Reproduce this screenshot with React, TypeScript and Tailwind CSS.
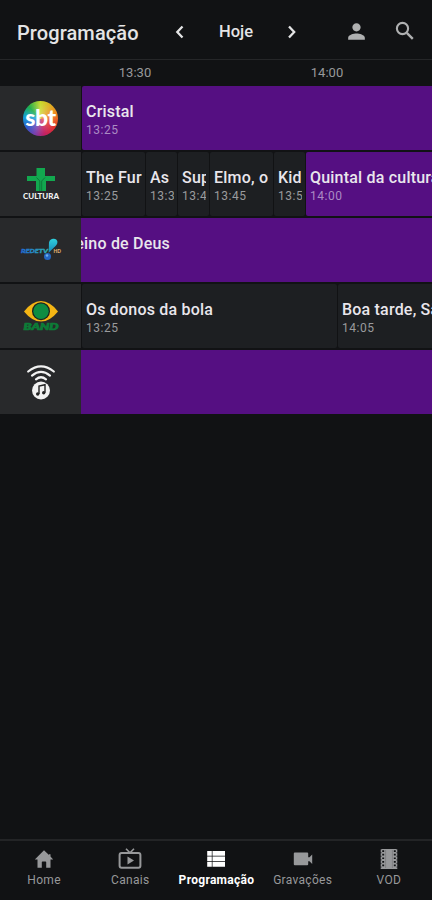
import React, { useState } from 'react';
import { MdPerson } from 'react-icons/md';

interface Program {
  title: string;
  time?: string;
  width: string;
  live?: boolean;
}

interface Channel {
  id: string;
  logo: React.ReactNode;
  programs: Program[];
}

const SbtLogo = () => (
  <div className="relative w-[35px] h-[35px] rounded-full flex items-center justify-center bg-[radial-gradient(circle,rgba(255,255,255,0.3),transparent_65%),conic-gradient(#c9d92c,#f08a1d_70deg,#e2342b_120deg,#c41f62_165deg,#7a3fae_200deg,#2f56c9_235deg,#12a0d8_275deg,#1fae4b_315deg,#c9d92c)]">
    <span className="font-['Lato'] font-black text-[23px] leading-none tracking-[-0.5px] text-white -mt-px">sbt</span>
  </div>
);

const CulturaLogo = () => (
  <svg width="38" height="34" viewBox="0 0 38 34">
    <path d="M14.500 1h8.500v8h10v5h-9v10h-10v-10h-9V9h9.500z" fill="#12a84f" />
    <path d="M14.500 10.500l3.300 3.500v10M23 10.500l-3.300 3.500v10" fill="none" stroke="#0b6e35" strokeWidth="0.8" />
    <text x="19" y="32.300" textAnchor="middle" textLength="36" lengthAdjust="spacingAndGlyphs" fontFamily="Lato" fontWeight="900" fontSize="7.800" fill="#f0f0f0">CULTURA</text>
  </svg>
);

const RedeTvLogo = () => (
  <svg width="42" height="24" viewBox="0 0 42 24">
    <defs>
      <linearGradient id="rtv" x1="0" x2="1">
        <stop offset="0" stopColor="#1f6bd6" />
        <stop offset="1" stopColor="#2fb8b4" />
      </linearGradient>
      <linearGradient id="drop" x1="0" x2="0" y1="0" y2="1">
        <stop offset="0" stopColor="#2fd0dd" />
        <stop offset="1" stopColor="#1786b8" />
      </linearGradient>
    </defs>
    <text x="1" y="14.500" textLength="27" lengthAdjust="spacingAndGlyphs" fontFamily="Lato" fontStyle="italic" fontWeight="900" fontSize="6.200" fill="url(#rtv)" stroke="url(#rtv)" strokeWidth="0.3">REDETV</text>
    <path d="M29 4.500C29.500 1.500 32 .5 34 .8c2.800.3 4 2.500 3.200 4.700-.9 2.700-4.700 5-8.700 9.500.6-4 .2-7 .5-10.500z" fill="url(#drop)" />
    <circle cx="27.500" cy="18.500" r="3.500" fill="#2467c4" />
    <circle cx="27" cy="17.500" r="1.300" fill="#6fb0ea" />
    <text x="33.500" y="14.500" textLength="7.500" lengthAdjust="spacingAndGlyphs" fontFamily="Lato" fontWeight="900" fontSize="4.800" fill="#e0b070">HD</text>
  </svg>
);

const BandLogo = () => (
  <svg width="38" height="32" viewBox="0 0 38 32">
    <path d="M2 11.500Q10 1 19 1t17 10.500Q28 21.500 19 21.500T2 11.500z" fill="#f4b514" />
    <circle cx="19" cy="11.200" r="9" fill="#1d2420" />
    <circle cx="19" cy="11.200" r="7.700" fill="#0e8c42" />
    <text x="1.500" y="30" textLength="35" lengthAdjust="spacingAndGlyphs" fontFamily="Lato" fontStyle="italic" fontWeight="900" fontSize="8.800" fill="#0c7c37" stroke="#0c7c37" strokeWidth="0.7">BAND</text>
  </svg>
);

const RadioLogo = () => (
  <svg width="30" height="36" viewBox="0 0 30 36">
    <g fill="none" stroke="#f2f2f2" strokeWidth="2.200" strokeLinecap="round">
      <path d="M2.200 7.500Q15-2.600 27.800 7.500" />
      <path d="M6 11.600Q15 4.200 24 11.600" />
      <path d="M10 15.300Q15 11.200 20 15.300" />
    </g>
    <circle cx="15" cy="26.500" r="9" fill="#f2f2f2" />
    <path d="M13 30v-8l6-1.300v8" fill="none" stroke="#222" strokeWidth="1.400" />
    <circle cx="11.700" cy="30" r="1.700" fill="#222" />
    <circle cx="17.700" cy="28.800" r="1.700" fill="#222" />
  </svg>
);

const Chevron: React.FC<{ d: string }> = ({ d }) => (
  <svg width="24" height="24" viewBox="0 0 24 24">
    <path d={d} fill="none" stroke="currentColor" strokeWidth="2.300" />
  </svg>
);

const SearchIcon = () => (
  <svg width="24" height="24" viewBox="0 0 24 24" fill="none" stroke="currentColor">
    <circle cx="9.500" cy="9.500" r="5.600" strokeWidth="2.100" />
    <path d="M13.800 13.800l6 6" strokeWidth="2.400" />
  </svg>
);

const HomeIcon = () => (
  <svg width="24" height="24" viewBox="0 0 24 24" fill="currentColor">
    <path d="M12 3.200L2.800 12.500h2.700v8.200h4.300v-5.500q0-.7.700-.7h3q.7 0 .7.700v5.500h4.300v-8.200h2.700L18.500 9.500V7.200h-1.500v.900z" />
  </svg>
);

const TvIcon = () => (
  <svg width="24" height="24" viewBox="0 0 24 24">
    <rect x="1.600" y="6" width="20.800" height="14.800" rx="2" fill="none" stroke="currentColor" strokeWidth="2" />
    <path d="M8 1.800l4 4 4-4" fill="none" stroke="currentColor" strokeWidth="1.600" />
    <path d="M9.500 9.500v8l6.500-4z" fill="currentColor" />
  </svg>
);

const GuideIcon = () => (
  <svg width="24" height="24" viewBox="0 0 24 24" fill="currentColor">
    <path d="M3.200 4h4.600v4.800H3.200zM8.500 4H21v4.800H8.500zM3.200 9.500h4.600v4.800H3.200zM8.500 9.500H21v4.800H8.500zM3.200 15h4.600v4.800H3.200zM8.500 15H21v4.800H8.500z" />
  </svg>
);

const CameraIcon = () => (
  <svg width="24" height="24" viewBox="0 0 24 24" fill="currentColor">
    <path d="M3.800 5.500h12.400q1 0 1 1v3.700h1.300l2.700-2.700v9.500l-2.700-2.700h-1.300v3q0 1-1 1H3.800q-1 0-1-1V6.500q0-1 1-1z" />
  </svg>
);

const FilmIcon = () => (
  <svg width="24" height="24" viewBox="0 0 24 24">
    <path d="M3.700 2h16.600v20H3.700z" fill="currentColor" />
    <path d="M6.200 3.200v18M17.800 3.200v18" stroke="#111214" strokeWidth="1.900" strokeDasharray="1.700 1.900" />
    <path d="M3.900 1.500v21M20.100 1.500v21" stroke="#111214" strokeWidth="0.900" strokeDasharray="1.200 2.400" />
    <path d="M8.600 3v18M15.400 3v18" stroke="#6c6d6f" strokeWidth="0.500" />
  </svg>
);

const CHANNELS: Channel[] = [
  {
    id: 'sbt',
    logo: <SbtLogo />,
    programs: [{ title: 'Cristal', time: '13:25', width: 'w-[400px]', live: true }],
  },
  {
    id: 'cultura',
    logo: <CulturaLogo />,
    programs: [
      { title: 'The Fur', time: '13:25', width: 'w-[64px]' },
      { title: 'As', time: '13:35', width: 'w-[32px]' },
      { title: 'Super', time: '13:40', width: 'w-[32px]' },
      { title: 'Elmo, o', time: '13:45', width: 'w-[64px]' },
      { title: 'Kid', time: '13:55', width: 'w-[32px]' },
      { title: 'Quintal da cultura', time: '14:00', width: 'w-[192px]', live: true },
    ],
  },
  {
    id: 'redetv',
    logo: <RedeTvLogo />,
    programs: [{ title: 'Reino de Deus', width: 'w-[421px] -ml-[21px]', live: true }],
  },
  {
    id: 'band',
    logo: <BandLogo />,
    programs: [
      { title: 'Os donos da bola', time: '13:25', width: 'w-[256px]' },
      { title: 'Boa tarde, São Paulo', time: '14:05', width: 'w-[256px]' },
    ],
  },
  {
    id: 'radio',
    logo: <RadioLogo />,
    programs: [{ title: '', width: 'w-[421px] -ml-[21px]', live: true }],
  },
];

const TABS = [
  { label: 'Home', Icon: HomeIcon },
  { label: 'Canais', Icon: TvIcon },
  { label: 'Programação', Icon: GuideIcon },
  { label: 'Gravações', Icon: CameraIcon },
  { label: 'VOD', Icon: FilmIcon },
];

const ProgramCell: React.FC<{ program: Program }> = ({ program }) => (
  <div className={`${program.width} shrink-0 h-full pr-px`}>
    <div className={`h-full pl-1 pr-[3px] pt-4 overflow-hidden rounded-[2px] ${program.live ? 'bg-[#550f82]' : 'bg-[#1d1f22]'}`}>
      <div className="overflow-hidden">
        <div className="text-[16px] leading-5 font-medium tracking-[0.2px] whitespace-nowrap text-[#e9e6ec]">{program.title}</div>
        <div className={`text-[12px] leading-[17px] tracking-[0.5px] whitespace-nowrap ${program.live ? 'text-[#ab8bc4]' : 'text-[#9a9b9d]'}`}>{program.time}</div>
      </div>
    </div>
  </div>
);

const App: React.FC = () => {
  const [activeTab, setActiveTab] = useState('Programação');

  return (
    <div className="w-full h-[900px] flex flex-col overflow-hidden bg-[#111214] font-['Roboto',sans-serif]">
      <header className="h-[60px] shrink-0 flex items-center pt-[6px] pl-[17px] pr-[15px] border-b border-[#252628] text-[#e4e4e5]">
        <h1 className="w-[151px] text-[20px] font-medium tracking-[0.1px]">Programação</h1>
        <button className="w-6 -mt-[2px]"><Chevron d="M14.500 6.500L9.300 12l5.200 5.500" /></button>
        <span className="w-[88px] text-center text-[16.500px] font-medium">Hoje</span>
        <button className="w-6 -mt-[2px]"><Chevron d="M9 6.500l5.200 5.500L9 17.500" /></button>
        <div className="ml-auto -mt-[3px] flex items-center gap-6 text-[#afb0b1]">
          <MdPerson size={25} />
          <SearchIcon />
        </div>
      </header>

      <div className="h-[26px] shrink-0 flex items-center pl-[39px] text-[13px] text-[#98999b]">
        <span className="w-[192px] text-center">13:30</span>
        <span className="w-[192px] text-center">14:00</span>
      </div>

      <main className="flex-1 flex flex-col gap-[2px] overflow-hidden">
        {CHANNELS.map((channel) => (
          <div key={channel.id} className="h-16 flex shrink-0">
            <div className="w-[81px] shrink-0 flex items-center justify-center bg-[#28292b]">{channel.logo}</div>
            <div className="flex flex-1 overflow-hidden pl-px">
              {channel.programs.map((program, i) => (
                <ProgramCell key={i} program={program} />
              ))}
            </div>
          </div>
        ))}
      </main>

      <nav className="h-[61px] shrink-0 grid grid-cols-5 pl-px border-t-2 border-[#232426]">
        {TABS.map(({ label, Icon }) => (
          <button
            key={label}
            onClick={() => setActiveTab(label)}
            className={`flex flex-col items-center pt-[6px] text-[12px] leading-4 tracking-[0.3px] ${activeTab === label ? 'text-white font-bold' : 'text-[#97989a]'}`}
          >
            <Icon />
            <span className="mt-px">{label}</span>
          </button>
        ))}
      </nav>
    </div>
  );
};

export default App;
